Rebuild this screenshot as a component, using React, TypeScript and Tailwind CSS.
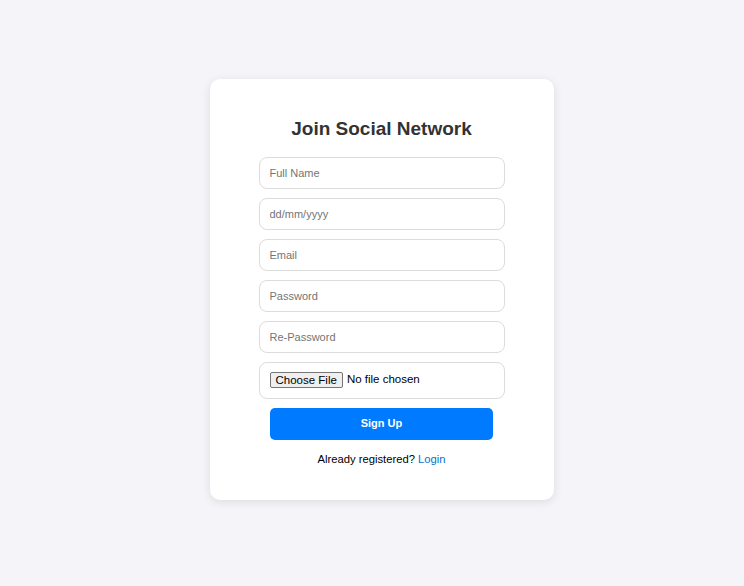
export default function App() {
  return (
    <div
      className="flex min-h-screen items-center justify-center bg-[#f4f4f9] pb-[8px] pl-[19px]"
      style={{ fontFamily: '"Liberation Sans", Arial, sans-serif' }}
    >
      <div className="w-[344px] rounded-[10px] bg-white px-[49px] pb-[33px] pt-[38px] shadow-[0_2px_10px_rgba(0,0,0,0.1)]">
        <h2 className="mb-[16px] text-center text-[19px] font-bold leading-[24px] text-[#333]">
          Join Social Network
        </h2>
        <form className="flex flex-col" onSubmit={(e) => e.preventDefault()}>
          {["Full Name", "dd/mm/yyyy", "Email", "Password", "Re-Password"].map((p) => (
            <input
              key={p}
              type="text"
              placeholder={p}
              className="mb-[9px] h-[32px] w-full rounded-[8px] border border-[#dcdcdc] px-[10px] text-[11px] text-[#333] outline-none placeholder:text-[#757575]"
            />
          ))}
          <div className="mb-[9px] flex h-[37px] w-full items-center rounded-[8px] border border-[#dcdcdc] px-[10px] text-[11.5px] text-black">
            <span className="mr-[4px] rounded-[2px] border border-[#767676] bg-[#efefef] px-[5px] leading-[14px]">
              Choose File
            </span>
            <span>No file chosen</span>
          </div>
          <button
            type="submit"
            className="mx-auto h-[32px] w-[223px] rounded-[5px] bg-[#007bff] text-[11px] font-bold text-white"
          >
            Sign Up
          </button>
        </form>
        <p className="mt-[11px] text-center text-[11.25px] leading-[16px] text-black">
          Already registered? <a className="text-[#0a6fd6]">Login</a>
        </p>
      </div>
    </div>
  );
}
